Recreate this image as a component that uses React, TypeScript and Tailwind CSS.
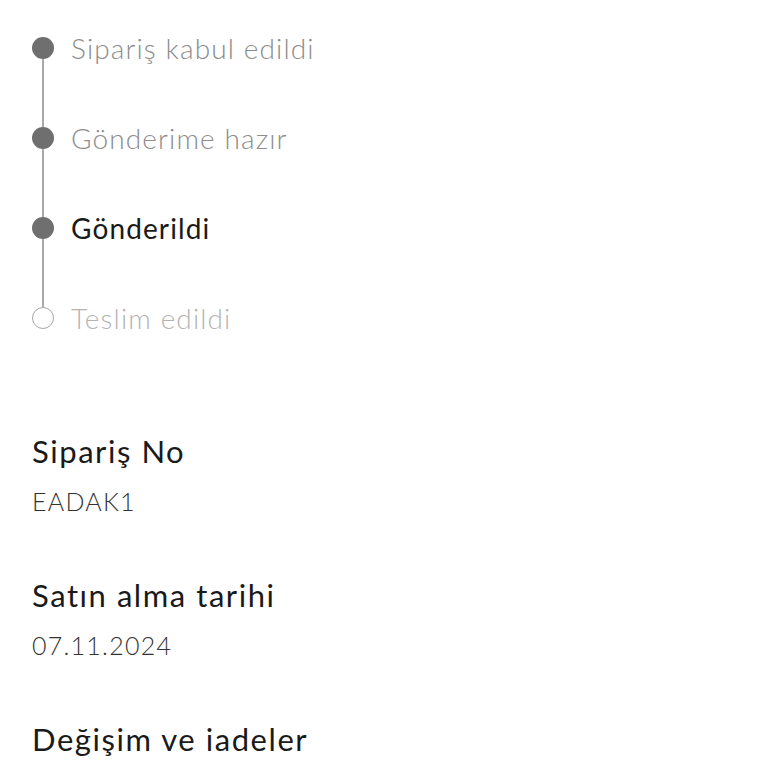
const steps = [
  { label: "Sipariş kabul edildi", state: "done" },
  { label: "Gönderime hazır", state: "done" },
  { label: "Gönderildi", state: "current" },
  { label: "Teslim edildi", state: "pending" },
] as const;

const details = [
  { title: "Sipariş No", value: "EADAK1" },
  { title: "Satın alma tarihi", value: "07.11.2024" },
];

export default function App() {
  return (
    <div className="min-h-screen bg-white px-8 pt-[37px] font-['Lato','Liberation_Sans',sans-serif] text-[#1a1a1a]">
      <ol className="flex flex-col">
        {steps.map((step, i) => {
          const last = i === steps.length - 1;
          return (
            <li key={step.label} className="flex gap-[17px]">
              <div className="flex w-[22px] flex-col items-center">
                {step.state === "pending" ? (
                  <span className="h-[22px] w-[22px] rounded-full border-[1.5px] border-[#a6a6a6] bg-white" />
                ) : (
                  <span className="h-[22px] w-[22px] rounded-full bg-[#6f6f6f]" />
                )}
                {!last && <span className="h-[68px] w-[2px] bg-[#a9a9a9]" />}
              </div>
              <span
                className={
                  "flex h-[22px] items-center text-[28px] leading-none tracking-[0.04em] " +
                  (step.state === "current"
                    ? "font-normal text-[#1a1a1a]"
                    : step.state === "done"
                      ? "font-light text-[#8c8c8c]"
                      : "font-light text-[#b4b4b4]")
                }
              >
                {step.label}
              </span>
            </li>
          );
        })}
      </ol>

      <div className="mt-[104px] flex flex-col gap-[60px]">
        {details.map((d) => (
          <div key={d.title} className="flex flex-col gap-[16px]">
            <h3 className="text-[31px] leading-9 font-normal tracking-[0.05em] text-[#1a1a1a]">{d.title}</h3>
            <p className="text-[25px] leading-8 font-light tracking-[0.05em] text-[#333333]">{d.value}</p>
          </div>
        ))}
        <h3 className="text-[31px] leading-9 font-normal tracking-[0.05em] text-[#1a1a1a]">Değişim ve iadeler</h3>
      </div>
    </div>
  );
}
